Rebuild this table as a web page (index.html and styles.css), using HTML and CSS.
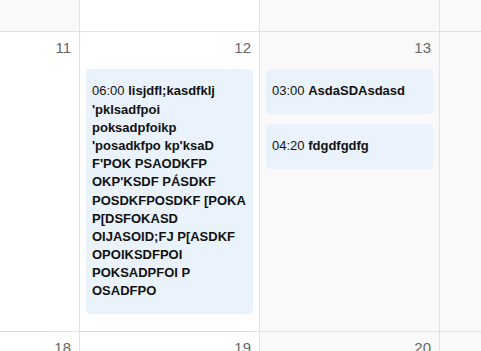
FILE: index.html
```html
<!DOCTYPE html>
<html>
<head>
<meta charset="utf-8">
<link rel="stylesheet" href="styles.css">
</head>
<body>
<div class="grid">
  <div class="cell muted top"></div>
  <div class="cell top"></div>
  <div class="cell muted top"></div>
  <div class="cell muted top last"></div>

  <div class="cell"><div class="num">11</div></div>
  <div class="cell">
    <div class="num">12</div>
    <div class="events">
      <div class="event"><span class="time">06:00</span> <b>lisjdfl;kasdfklj 'pklsadfpoi poksadpfoikp 'posadkfpo kp'ksaD F'POK PSAODKFP OKP'KSDF PÁSDKF POSDKFPOSDKF [POKA P[DSFOKASD OIJASOID;FJ P[ASDKF OPOIKSDFPOI POKSADPFOI P OSADFPO</b></div>
    </div>
  </div>
  <div class="cell muted">
    <div class="num">13</div>
    <div class="events">
      <div class="event"><span class="time">03:00</span> <b>AsdaSDAsdasd</b></div>
      <div class="event"><span class="time">04:20</span> <b>fdgdfgdfg</b></div>
    </div>
  </div>
  <div class="cell muted last"></div>

  <div class="cell"><div class="num">18</div></div>
  <div class="cell"><div class="num">19</div></div>
  <div class="cell muted"><div class="num">20</div></div>
  <div class="cell muted last"></div>
</div>
</body>
</html>
```

FILE: styles.css
```css
html, body {
  margin: 0;
  padding: 0;
  background: #ffffff;
  overflow: hidden;
}
body {
  font-family: "Liberation Sans", Arial, sans-serif;
  width: 481px;
  height: 351px;
}
.grid {
  display: grid;
  grid-template-columns: 80px 180px 180px 1fr;
  grid-template-rows: 32px 300px 40px;
  height: 351px;
  overflow: hidden;
}
.cell {
  box-sizing: border-box;
  border-right: 1px solid #e2e2e2;
  border-bottom: 1px solid #e2e2e2;
  background: #ffffff;
  min-width: 0;
}
.cell.last {
  border-right: none;
}
.cell.muted {
  background: #f9f9f9;
}
.num {
  text-align: right;
  font-size: 15px;
  line-height: 17px;
  color: #666666;
  padding: 7px 8px 0 0;
}
.events {
  display: flex;
  flex-direction: column;
  gap: 10px;
  margin: 13px 6px 0 6px;
}
.event {
  background: #eaf3fb;
  border-radius: 4px;
  padding: 13.4px 6px;
  font-size: 13px;
  line-height: 1.4;
  color: #111111;
}
.time {
  font-weight: normal;
}
.event b {
  font-weight: bold;
}
```
